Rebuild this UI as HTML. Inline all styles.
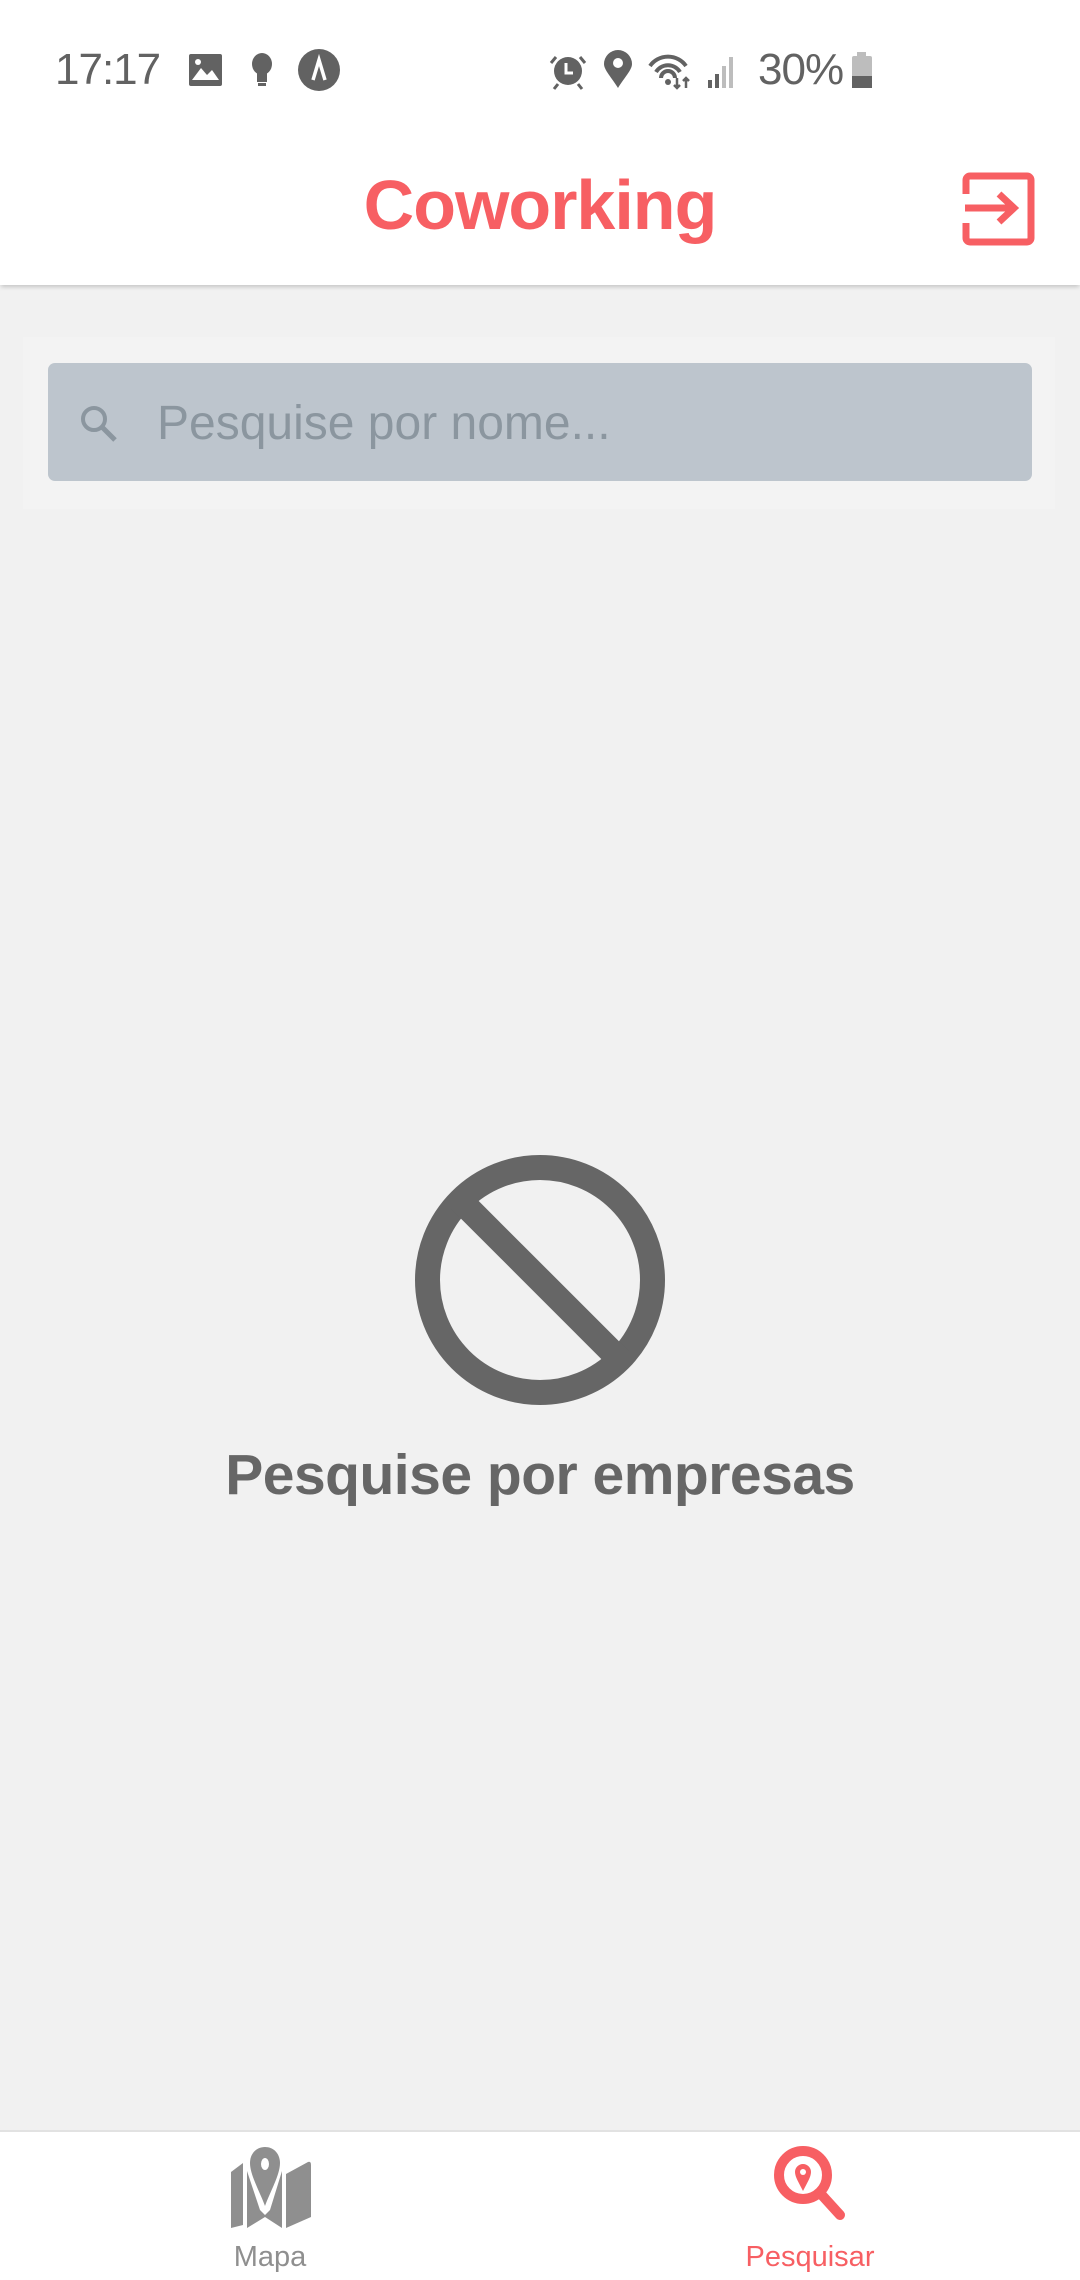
<!DOCTYPE html>
<html><head><meta charset="utf-8"><style>
*{margin:0;padding:0;box-sizing:border-box}
body{width:1080px;height:2280px;background:#f1f1f1;font-family:"Liberation Sans",Roboto,sans-serif;position:relative;overflow:hidden}
.abs{position:absolute}
#status{left:0;top:0;width:1080px;height:130px;background:#fff}
#header{left:0;top:130px;width:1080px;height:155px;background:#fff;box-shadow:0 3px 4px -1px rgba(0,0,0,0.18)}
.st{color:#626262;font-size:44px;top:45px;line-height:50px}
#nav{left:0;top:2130px;width:1080px;height:150px;background:#fff;border-top:2px solid #e2e2e2}
</style></head><body>
<div id="header" class="abs"></div>
<div id="status" class="abs"></div>
<div class="abs st" style="left:55px;letter-spacing:-1px">17:17</div>
<svg class="abs" style="left:0;top:0" width="1080" height="130">
 <rect x="189" y="54" width="33" height="32" rx="2" fill="#626262"/>
 <path d="M192 80 L201 68 L207 75 L212 70 L219 80 Z" fill="#fff"/>
 <circle cx="198" cy="62" r="3" fill="#fff"/>
 <ellipse cx="262" cy="64" rx="10" ry="11" fill="#626262"/>
 <rect x="257" y="73" width="10" height="9" fill="#626262"/><rect x="258" y="83" width="8" height="3" fill="#626262"/>
 <circle cx="319" cy="70" r="21" fill="#626262"/>
 <path d="M313 80 L319 60 L325 80" stroke="#fff" stroke-width="3.5" fill="none"/>
 <circle cx="568" cy="71" r="14" fill="#626262"/>
 <path d="M556 57 l-5 6 M580 57 l5 6 M558 84 l-4 5 M578 84 l4 5" stroke="#626262" stroke-width="3"/>
 <path d="M566 63 v10 h7" stroke="#fff" stroke-width="3" fill="none"/>
 <path d="M618 88 C612 78 604 70 604 64 A14 14 0 0 1 632 64 C632 70 624 78 618 88 Z" fill="#626262"/>
 <circle cx="618" cy="63" r="5" fill="#fff"/>
 <path d="M650 66 A22 22 0 0 1 686 66 M656 72 A14 14 0 0 1 680 72 M661 78 A7 7 0 0 1 675 78" stroke="#626262" stroke-width="4" fill="none"/>
 <circle cx="668" cy="82" r="3" fill="#626262"/>
 <path d="M677 78 v10 m-3 -3 l3 3 l3 -3 M686 88 v-10 m-3 3 l3 -3 l3 3" stroke="#626262" stroke-width="2.5" fill="none"/>
 <rect x="708" y="80" width="4" height="8" fill="#626262"/><rect x="715" y="74" width="4" height="14" fill="#626262"/>
 <rect x="722" y="66" width="4" height="22" fill="#bdbdbd"/><rect x="729" y="57" width="4" height="31" fill="#bdbdbd"/>
 <rect x="857" y="52" width="9" height="5" fill="#bdbdbd"/>
 <rect x="852" y="56" width="20" height="32" rx="2" fill="#bdbdbd"/>
 <rect x="852" y="76" width="20" height="12" fill="#626262"/>
</svg>
<div class="abs st" style="left:758px;letter-spacing:-1px">30%</div>

<div class="abs" style="left:0;width:1080px;top:160px;text-align:center;color:#f75f63;font-weight:bold;font-size:70px;line-height:90px;letter-spacing:-1px">Coworking</div>
<svg class="abs" style="left:960px;top:170px" width="80" height="80">
 <path d="M6 24 V10 A4 4 0 0 1 10 6 H67 A4 4 0 0 1 71 10 V68 A4 4 0 0 1 67 72 H10 A4 4 0 0 1 6 68 V53" stroke="#f75f63" stroke-width="7" fill="none"/>
 <path d="M5 38 H52 M39 24 L54 38 L39 52" stroke="#f75f63" stroke-width="7" fill="none"/>
</svg>

<div class="abs" style="left:23px;top:337px;width:1032px;height:172px;background:#f3f3f3"></div>
<div class="abs" style="left:48px;top:363px;width:984px;height:118px;background:#bdc5cd;border-radius:7px"></div>
<svg class="abs" style="left:75px;top:400px" width="50" height="50">
 <circle cx="19" cy="19" r="11" stroke="#8b969f" stroke-width="4" fill="none"/>
 <path d="M27 27 L40 40" stroke="#8b969f" stroke-width="5"/>
</svg>
<div class="abs" style="left:157px;top:394px;font-size:48px;line-height:60px;color:#8b969f">Pesquise por nome...</div>

<svg class="abs" style="left:400px;top:1140px" width="280" height="280">
 <circle cx="140" cy="140" r="112.5" stroke="#666" stroke-width="25" fill="none"/>
 <path d="M60 60 L220 220" stroke="#666" stroke-width="25"/>
</svg>
<div class="abs" style="left:0;width:1080px;top:1440px;text-align:center;font-size:57px;line-height:70px;font-weight:bold;color:#666;letter-spacing:-0.5px">Pesquise por empresas</div>

<div id="nav" class="abs"></div>
<svg class="abs" style="left:220px;top:2140px" width="100" height="90">
 <path d="M11 32 L23 23 V85 L11 88 Z" fill="#8f8f8f"/>
 <path d="M27 31 L40 70 L45 75 L50 70 L62 31 V88 L45 77 L27 88 Z" fill="#8f8f8f"/>
 <path d="M66 34 L88 22 Q91 21 91 25 V77 L66 88 Z" fill="#8f8f8f"/>
 <path d="M45 7 C36 7 30 14 30 23 C30 35 40 52 45 66 C50 52 60 35 60 23 C60 14 54 7 45 7 Z" fill="#8f8f8f"/>
 <ellipse cx="45" cy="24" rx="4" ry="6" fill="#fff"/>
</svg>
<div class="abs" style="left:200px;width:140px;top:2240px;text-align:center;font-size:29px;line-height:34px;color:#8f8f8f">Mapa</div>
<svg class="abs" style="left:760px;top:2135px" width="100" height="100">
 <circle cx="43" cy="40" r="24" stroke="#f75f63" stroke-width="10" fill="none"/>
 <path d="M60 58 L80 80" stroke="#f75f63" stroke-width="10" stroke-linecap="round"/>
 <path d="M43 56 C39 48 35 42 35 37 A8 8 0 0 1 51 37 C51 42 47 48 43 56 Z" fill="#f75f63"/>
 <circle cx="43" cy="37" r="3" fill="#fff"/>
</svg>
<div class="abs" style="left:730px;width:160px;top:2240px;text-align:center;font-size:29px;line-height:34px;color:#f75f63">Pesquisar</div>
</body></html>
